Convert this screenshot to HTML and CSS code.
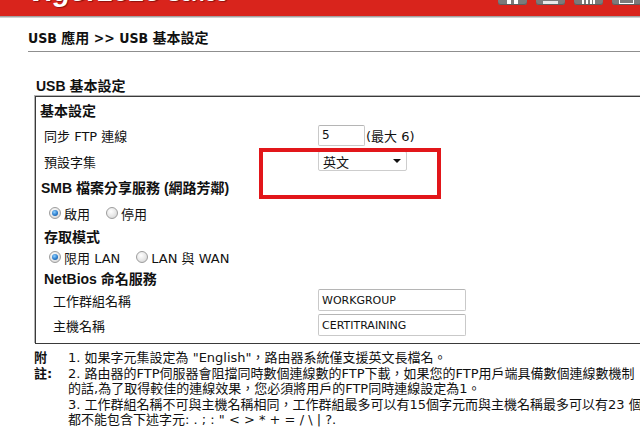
FILE: index.html
```html
<!DOCTYPE html>
<html lang="zh-Hant">
<head>
<meta charset="utf-8">
<title>USB 基本設定</title>
<link rel="stylesheet" href="styles.css">
</head>
<body>
<header class="topbar">
  <div class="brand"><span class="model">Vigor2925</span><span class="series">Series</span></div>
  <div class="tools">
    <span class="tool"><i class="g g-home"></i></span>
    <span class="tool"><i class="g g-bar"></i></span>
    <span class="tool"><i class="g g-chart"></i></span>
    <span class="tool"><i class="g g-box"></i></span>
  </div>
</header>
<div class="shade"></div>
<main class="page">
  <div class="crumb">USB 應用 &gt;&gt; USB 基本設定</div>
  <div class="rule"></div>
  <div class="sect-title">USB 基本設定</div>
  <section class="panel">
    <div class="row r-head"><span class="head h1">基本設定</span></div>
    <div class="row r-field">
      <span class="label">同步 FTP 連線</span>
      <span class="value"><span class="input small">5</span><span class="hint">(最大 6)</span></span>
    </div>
    <div class="row r-field">
      <span class="label">預設字集</span>
      <span class="value"><span class="select">英文<i class="arrow"></i></span></span>
    </div>
    <div class="row r-field"><span class="head h2">SMB 檔案分享服務 (網路芳鄰)</span></div>
    <div class="row r-field">
      <span class="radios">
        <span class="opt"><i class="radio on"></i>啟用</span>
        <span class="opt"><i class="radio"></i>停用</span>
      </span>
    </div>
    <div class="row r-mode"><span class="head h3">存取模式</span></div>
    <div class="row r-radio">
      <span class="radios">
        <span class="opt"><i class="radio on"></i>限用 LAN</span>
        <span class="opt"><i class="radio"></i>LAN 與 WAN</span>
      </span>
    </div>
    <div class="row r-nb"><span class="head h3">NetBios 命名服務</span></div>
    <div class="row r-wg">
      <span class="label sub">工作群組名稱</span>
      <span class="value"><span class="input big">WORKGROUP</span></span>
    </div>
    <div class="row r-host">
      <span class="label sub">主機名稱</span>
      <span class="value"><span class="input big">CERTITRAINING</span></span>
    </div>
  </section>
  <section class="notes">
    <div class="note-key"><b>附</b><b>註:</b></div>
    <div class="note-body">
      <div class="nl">1. 如果字元集設定為 "English"，路由器系統僅支援英文長檔名。</div>
      <div class="nl">2. 路由器的FTP伺服器會阻擋同時數個連線數的FTP下載，如果您的FTP用戶端具備數個連線數機制</div>
      <div class="nl">的話,為了取得較佳的連線效果，您必須將用戶的FTP同時連線設定為1。</div>
      <div class="nl">3. 工作群組名稱不可與主機名稱相同，工作群組最多可以有15個字元而與主機名稱最多可以有23 個</div>
      <div class="nl">都不能包含下述字元: . ; : " &lt; &gt; * + = / \ | ?.</div>
    </div>
  </section>
</main>
<div class="highlight"></div>
</body>
</html>
```

FILE: styles.css
```css
html, body {
  margin: 0;
  padding: 0;
  background: #fff;
  overflow: hidden;
}
body {
  width: 640px;
  height: 429px;
  position: relative;
  font-family: "DejaVu Sans", "Noto Sans CJK TC", sans-serif;
  font-size: 13px;
  color: #111;
}

/* header */
.topbar {
  height: 16px;
  background: #d9241c;
  display: flex;
  justify-content: space-between;
  overflow: hidden;
}
.brand {
  margin: -19px 0 0 28px;
  color: #fff;
  font-family: "Liberation Sans", sans-serif;
  font-style: italic;
  font-weight: bold;
  white-space: nowrap;
  line-height: 22px;
  text-shadow: 1px 1px 1px rgba(80, 0, 0, 0.55);
  display: flex;
  align-items: baseline;
  gap: 7px;
}
.model { font-size: 28px; }
.series { font-size: 20px; }
.tools {
  display: flex;
  gap: 9px;
  margin-right: -1px;
}
.tool {
  width: 29px;
  height: 22px;
  margin-top: -17px;
  background: #7b7b7b;
  border-radius: 3px;
  box-shadow: inset 0 -1px 0 #5e5e5e;
  position: relative;
}
.g { position: absolute; display: block; }
.g-home { left: 9px; bottom: 1px; width: 11px; height: 4px;
  background: linear-gradient(90deg, #fff 0 4px, transparent 4px 7px, #fff 7px 11px); }
.g-bar { left: 7px; bottom: 1px; width: 15px; height: 3px; background: #e8e8e8; }
.g-chart { left: 8px; bottom: 1px; width: 13px; height: 4px;
  background: linear-gradient(90deg, #fff 0 2px, transparent 2px 4px, #fff 4px 6px, transparent 6px 8px, #fff 8px 10px, transparent 10px 11px, #fff 11px 13px); }
.g-box { left: 7px; bottom: 1px; width: 13px; height: 4px; border: 1px solid #fff; border-top: 0; }

.shade {
  height: 2px;
  background: linear-gradient(#8c8c8c, #e6e6e6);
}

/* page */
.page {
  padding-left: 28px;
}
.crumb {
  margin-top: 13px;
  height: 14px;
  line-height: 14px;
  font-size: 14px;
  font-weight: bold;
  font-family: "DejaVu Sans Condensed", "DejaVu Sans", "Noto Sans CJK TC", sans-serif;
  font-stretch: condensed;
  white-space: nowrap;
}
.rule {
  margin-top: 6px;
  height: 1px;
  background: #8f8f8f;
}
.sect-title {
  margin: 27px 0 0 8px;
  height: 14px;
  line-height: 14px;
  font-size: 14px;
  font-weight: bold;
  font-family: "Liberation Sans", "Noto Sans CJK TC", sans-serif;
}

.panel {
  margin: 3px 0 0 7px;
  width: 620px;
  border: 1px solid #3a3a3a;
  box-shadow: -1px -1px 0 #b4b4b4;
  padding-bottom: 5px;
}
.row {
  display: grid;
  grid-template-columns: 282px auto;
  align-items: center;
}
.r-head { height: 25px; }
.r-field { height: 26px; }
.r-mode { height: 20px; }
.r-radio { height: 22px; }
.r-nb { height: 20px; }
.r-wg { height: 24px; }
.r-host { height: 26px; }

.head {
  grid-column: 1 / 3;
  font-weight: bold;
  font-size: 14px;
  white-space: nowrap;
  font-family: "Liberation Sans", "Noto Sans CJK TC", sans-serif;
}
.h1 { padding-left: 4px; }
.h2 { padding-left: 5px; }
.h3 { padding-left: 8px; }

.label {
  padding-left: 8px;
  white-space: nowrap;
}
.label.sub { padding-left: 17px; }
.value {
  display: flex;
  align-items: center;
}

.input {
  box-sizing: border-box;
  display: flex;
  align-items: center;
  border: 1px solid #c9c9c9;
  border-top-color: #b5b5b5;
  border-radius: 2px;
  background: #fff;
  padding-left: 3px;
  font-size: 11px;
  color: #111;
}
.input.small { width: 47px; height: 21px; font-size: 12px; }
.input.big { width: 148px; height: 22px; }
.hint { margin-left: 1px; white-space: nowrap; }

.select {
  box-sizing: border-box;
  width: 89px;
  height: 20px;
  border: 1px solid #cdcdcd;
  border-radius: 2px;
  display: flex;
  align-items: center;
  justify-content: space-between;
  padding: 0 5px 0 4px;
  font-size: 13px;
}
.arrow {
  width: 0;
  height: 0;
  border-left: 4px solid transparent;
  border-right: 4px solid transparent;
  border-top: 4px solid #111;
}

.radios {
  grid-column: 1 / 3;
  display: flex;
  align-items: center;
  padding-left: 13px;
  white-space: nowrap;
}
.opt {
  display: flex;
  align-items: center;
  gap: 3px;
  margin-right: 16px;
}
.radio {
  box-sizing: border-box;
  width: 12px;
  height: 12px;
  border-radius: 50%;
  border: 1px solid #9d9d9d;
  background: radial-gradient(circle at 40% 35%, #ffffff 0%, #e4e4e4 60%, #c8c8c8 100%);
  display: flex;
  align-items: center;
  justify-content: center;
}
.radio.on::after {
  content: "";
  width: 6px;
  height: 6px;
  border-radius: 50%;
  background: radial-gradient(circle at 40% 35%, #8fd0ff 0%, #2a7ccc 55%, #134f8f 100%);
}

/* notes */
.notes {
  margin: 6px 0 0 6px;
  display: flex;
  line-height: 15.5px;
  font-size: 13px;
}
.note-key {
  width: 34px;
  flex: none;
  display: flex;
  flex-direction: column;
}
.note-key b { font-weight: bold; }
.note-body { white-space: nowrap; }
.nl { height: 15.5px; }

.highlight {
  position: absolute;
  left: 259px;
  top: 148px;
  width: 182px;
  height: 51px;
  box-sizing: border-box;
  border: 4px solid #e2161a;
}
```
